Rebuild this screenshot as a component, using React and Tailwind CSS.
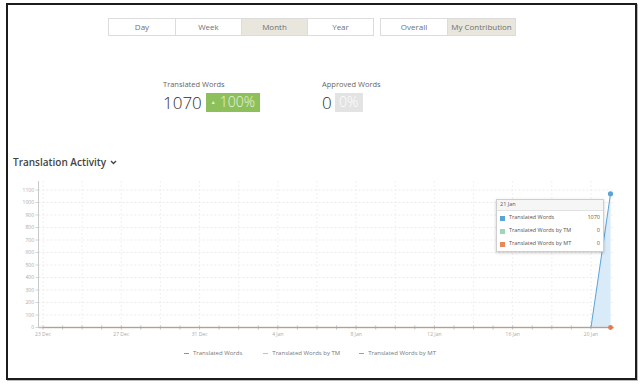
import React from "react";

const DAY = 19.57;
const X0 = 43;
const Y0 = 327.5;
const PER = 0.125;

const yTicks = [0, 100, 200, 300, 400, 500, 600, 700, 800, 900, 1000, 1100];
const xLabels = ["23 Dec", "27 Dec", "31 Dec", "4 Jan", "8 Jan", "12 Jan", "16 Jan", "20 Jan"];

const Chart = () => {
  const days = Array.from({ length: 30 }, (_, i) => i);
  const xTop = X0 + 29 * DAY;
  const yTop = Y0 - 1070 * PER;

  return (
    <svg width="626" height="170" viewBox="8 175 626 170" className="block">
      {/* grid */}
      {yTicks.map((v) => (
        <line
          key={"h" + v}
          x1="38.5"
          x2="614"
          y1={Y0 - v * PER}
          y2={Y0 - v * PER}
          stroke="#e6e6e6"
          strokeDasharray="2 2"
          strokeWidth="0.8"
        />
      ))}
      {days
        .filter((d) => d % 2 === 0)
        .map((d) => (
          <line
            key={"v" + d}
            x1={X0 + d * DAY}
            x2={X0 + d * DAY}
            y1="181"
            y2={Y0}
            stroke="#ececec"
            strokeDasharray="2 2"
            strokeWidth="0.8"
          />
        ))}

      {/* y axis */}
      <line x1="38.5" x2="38.5" y1="181" y2={Y0} stroke="#c8c8c8" strokeWidth="1" />
      {yTicks.map((v) => (
        <g key={"t" + v}>
          <line x1="35.5" x2="38.5" y1={Y0 - v * PER} y2={Y0 - v * PER} stroke="#c8c8c8" strokeWidth="0.8" />
          <text
            x="34"
            y={Y0 - v * PER + 1.8}
            textAnchor="end"
            fontSize="5"
            fill="#aaa"
            fontFamily="Open Sans, sans-serif"
          >
            {v}
          </text>
        </g>
      ))}

      {/* x axis ticks */}
      {days.map((d) => (
        <line
          key={"xt" + d}
          x1={X0 + d * DAY}
          x2={X0 + d * DAY}
          y1={Y0 - 2}
          y2={Y0 + 2}
          stroke="#b0b0b0"
          strokeWidth="0.8"
        />
      ))}
      {xLabels.map((l, i) => (
        <text
          key={l}
          x={X0 + i * 4 * DAY}
          y="336"
          textAnchor="middle"
          fontSize="5"
          fill="#aaa"
          fontFamily="Open Sans, sans-serif"
        >
          {l}
        </text>
      ))}

      {/* area */}
      <polygon
        points={`${X0 + 28 * DAY},${Y0} ${xTop},${yTop} ${xTop},${Y0}`}
        fill="#d9eaf8"
      />
      {/* series */}
      <line x1="38.5" x2="614" y1={Y0} y2={Y0} stroke="#c9b9a8" strokeWidth="1.4" />
      <polyline
        points={`${X0},${Y0} ${X0 + 28 * DAY},${Y0} ${xTop},${yTop}`}
        fill="none"
        stroke="#5aa3d8"
        strokeWidth="1"
      />
      <line x1={X0} x2={xTop} y1={Y0} y2={Y0} stroke="#b5a08c" strokeWidth="1" />
      <circle cx={xTop} cy={yTop} r="2.6" fill="#5aa3d8" />
      <circle cx={xTop} cy={Y0} r="2.4" fill="#e27a4c" />
    </svg>
  );
};

const Tooltip = () => (
  <div className="absolute left-[488px] top-[24px] w-[108px] h-[53px] bg-white border border-[#cfcfcf] shadow-[0_1px_3px_rgba(0,0,0,0.2)] text-[5.5px] text-[#555] leading-none">
    <div className="h-[11px] flex items-center px-[3px] bg-[#f6f6f6] border-b border-[#e2e2e2]">21 Jan</div>
    <div className="flex flex-col px-[3px] pt-[4px] gap-[7px]">
      {[
        ["#5aa3d8", "Translated Words", "1070"],
        ["#9fd6b6", "Translated Words by TM", "0"],
        ["#e8875d", "Translated Words by MT", "0"],
      ].map(([c, l, v]) => (
        <div key={l} className="flex items-center h-[6px]">
          <span className="w-[5px] h-[5px] mr-[4px]" style={{ backgroundColor: c }} />
          <span className="flex-1">{l}</span>
          <span>{v}</span>
        </div>
      ))}
    </div>
  </div>
);

const App = () => {
  return (
    <div className="w-[640px] h-[385px] bg-white pt-[3px] pl-[6px] font-['Open_Sans',sans-serif]">
      <div className="w-[631px] h-[377px] border-2 border-[#1c1c1c] shadow-[1px_1px_0_#bbb]">
        {/* period / scope toggles */}
        <div className="flex pt-[13px] pl-[100px] gap-[6px]">
          <div className="flex border border-[#dcdcdc] text-[8px] text-[#707070]">
            <button className="w-[66px] h-[16px] bg-white">Day</button>
            <button className="w-[66px] h-[16px] bg-white border-l border-[#dcdcdc]">Week</button>
            <button className="w-[66px] h-[16px] bg-[#e9e6de] border-l border-[#dcdcdc]">Month</button>
            <button className="w-[66px] h-[16px] bg-white border-l border-[#dcdcdc]">Year</button>
          </div>
          <div className="flex border border-[#dcdcdc] text-[8px] text-[#707070]">
            <button className="w-[66px] h-[16px] bg-white">Overall</button>
            <button className="w-[68px] h-[16px] bg-[#e9e6de] border-l border-[#dcdcdc]">My Contribution</button>
          </div>
        </div>

        {/* stats */}
        <div className="flex pl-[155px] mt-[43px]">
          <div className="w-[159px]">
            <p className="text-[7.5px] leading-[10px] text-[#666]">Translated Words</p>
            <div className="flex items-center mt-[6px] h-[14px]">
              <span className="text-[17px] font-light text-[#2e2e2e] leading-none">1070</span>
              <span className="ml-[4px] h-[19px] w-[54px] bg-[#8dc05a] text-[#e9f5dc] flex items-center justify-center gap-[4px] leading-none">
                <span className="text-[5px]">▲</span>
                <span className="text-[14px] font-light">100%</span>
              </span>
            </div>
          </div>
          <div>
            <p className="text-[7.5px] leading-[10px] text-[#666]">Approved Words</p>
            <div className="flex items-center mt-[6px] h-[14px]">
              <span className="text-[17px] font-light text-[#2e2e2e] leading-none">0</span>
              <span className="ml-[3px] h-[19px] w-[28px] bg-[#e3e3e3] text-white flex items-center justify-center leading-none">
                <span className="text-[14px] font-light">0%</span>
              </span>
            </div>
          </div>
        </div>

        {/* chart title */}
        <div className="flex items-center pl-[5px] mt-[47px] gap-[4px] text-[#444]">
          <span className="text-[10px] font-semibold leading-[12px]">Translation Activity</span>
          <svg width="7" height="5" viewBox="0 0 7 5">
            <path d="M1 1l2.5 2.5L6 1" stroke="#444" strokeWidth="1.4" fill="none" />
          </svg>
        </div>

        {/* chart */}
        <div className="relative mt-[7px]">
          <Chart />
          <Tooltip />
        </div>

        {/* legend */}
        <div className="flex items-center pl-[176px] mt-[3px] text-[6px] text-[#777] leading-[10px]">
          <span className="w-[5px] h-[1px] bg-[#5aa3d8] mr-[4px]" />
          <span className="mr-[21px]">Translated Words</span>
          <span className="w-[5px] h-[1px] bg-[#9fd6b6] mr-[4px]" />
          <span className="mr-[19px]">Translated Words by TM</span>
          <span className="w-[5px] h-[1px] bg-[#e8875d] mr-[4px]" />
          <span>Translated Words by MT</span>
        </div>
      </div>
    </div>
  );
};

export default App;
